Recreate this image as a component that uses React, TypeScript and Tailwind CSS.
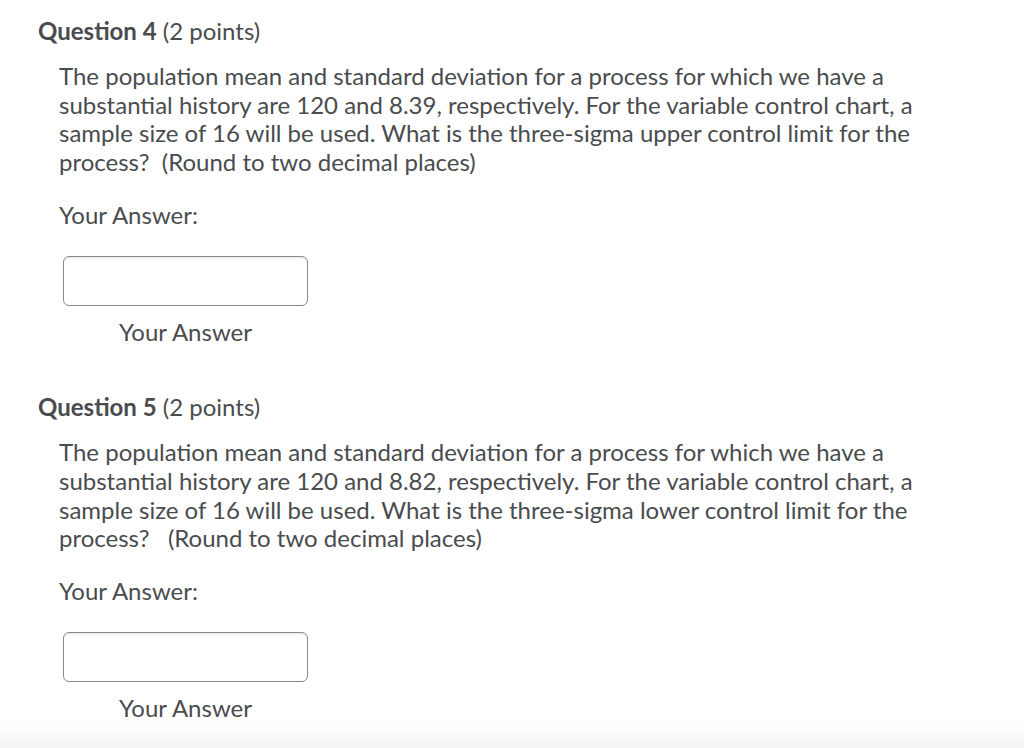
import React from 'react';

interface Question {
  num: number;
  lines: string[];
}

const questions: Question[] = [
  {
    num: 4,
    lines: [
      'The population mean and standard deviation for a process for which we have a',
      'substantial history are 120 and 8.39, respectively. For the variable control chart, a',
      'sample size of 16 will be used. What is the three-sigma upper control limit for the',
      'process?\u00a0 (Round to two decimal places)',
    ],
  },
  {
    num: 5,
    lines: [
      'The population mean and standard deviation for a process for which we have a',
      'substantial history are 120 and 8.82, respectively. For the variable control chart, a',
      'sample size of 16 will be used. What is the three-sigma lower control limit for the',
      'process?\u00a0\u00a0 (Round to two decimal places)',
    ],
  },
];

function QuestionBlock({ q, first }: { q: Question; first: boolean }) {
  return (
    <section className={first ? 'pt-[17px]' : 'pt-[47px]'}>
      <h2 className="pl-[38px] text-[24px] leading-[28px] text-[#494c4e]">
        <span className="font-bold">Question {q.num}</span> (2 points)
      </h2>
      <div className="pl-[59px] mt-[17px]">
        <p className="text-[24px] leading-[28.7px] text-[#494c4e]">
          {q.lines.map((l, i) => (
            <React.Fragment key={i}>
              {l}
              {i < q.lines.length - 1 && <br />}
            </React.Fragment>
          ))}
        </p>
        <div className="mt-[24px] text-[24px] leading-[28.7px] text-[#494c4e]">Your Answer:</div>
        <div className="mt-[26px] ml-[4px] w-[245px] flex flex-col items-center">
          <input
            type="text"
            aria-label="Your Answer"
            className="w-[245px] h-[50px] rounded-[6px] border border-[#8a8a8a] bg-white shadow-[inset_0_2px_0_0_rgba(0,0,0,0.06)] outline-none"
          />
          <div className="mt-[12px] text-[24px] leading-[28.7px] text-[#494c4e]">Your Answer</div>
        </div>
      </div>
    </section>
  );
}

export default function App() {
  return (
    <div
      className="w-[1024px] h-[748px] bg-white flex flex-col overflow-hidden"
      style={{ fontFamily: 'Lato, "Open Sans", sans-serif' }}
    >
      <div className="flex-1">
        {questions.map((q, i) => (
          <QuestionBlock key={q.num} q={q} first={i === 0} />
        ))}
      </div>
      <div className="h-[28px] bg-gradient-to-b from-white to-[#f3f3f3]" />
    </div>
  );
}
